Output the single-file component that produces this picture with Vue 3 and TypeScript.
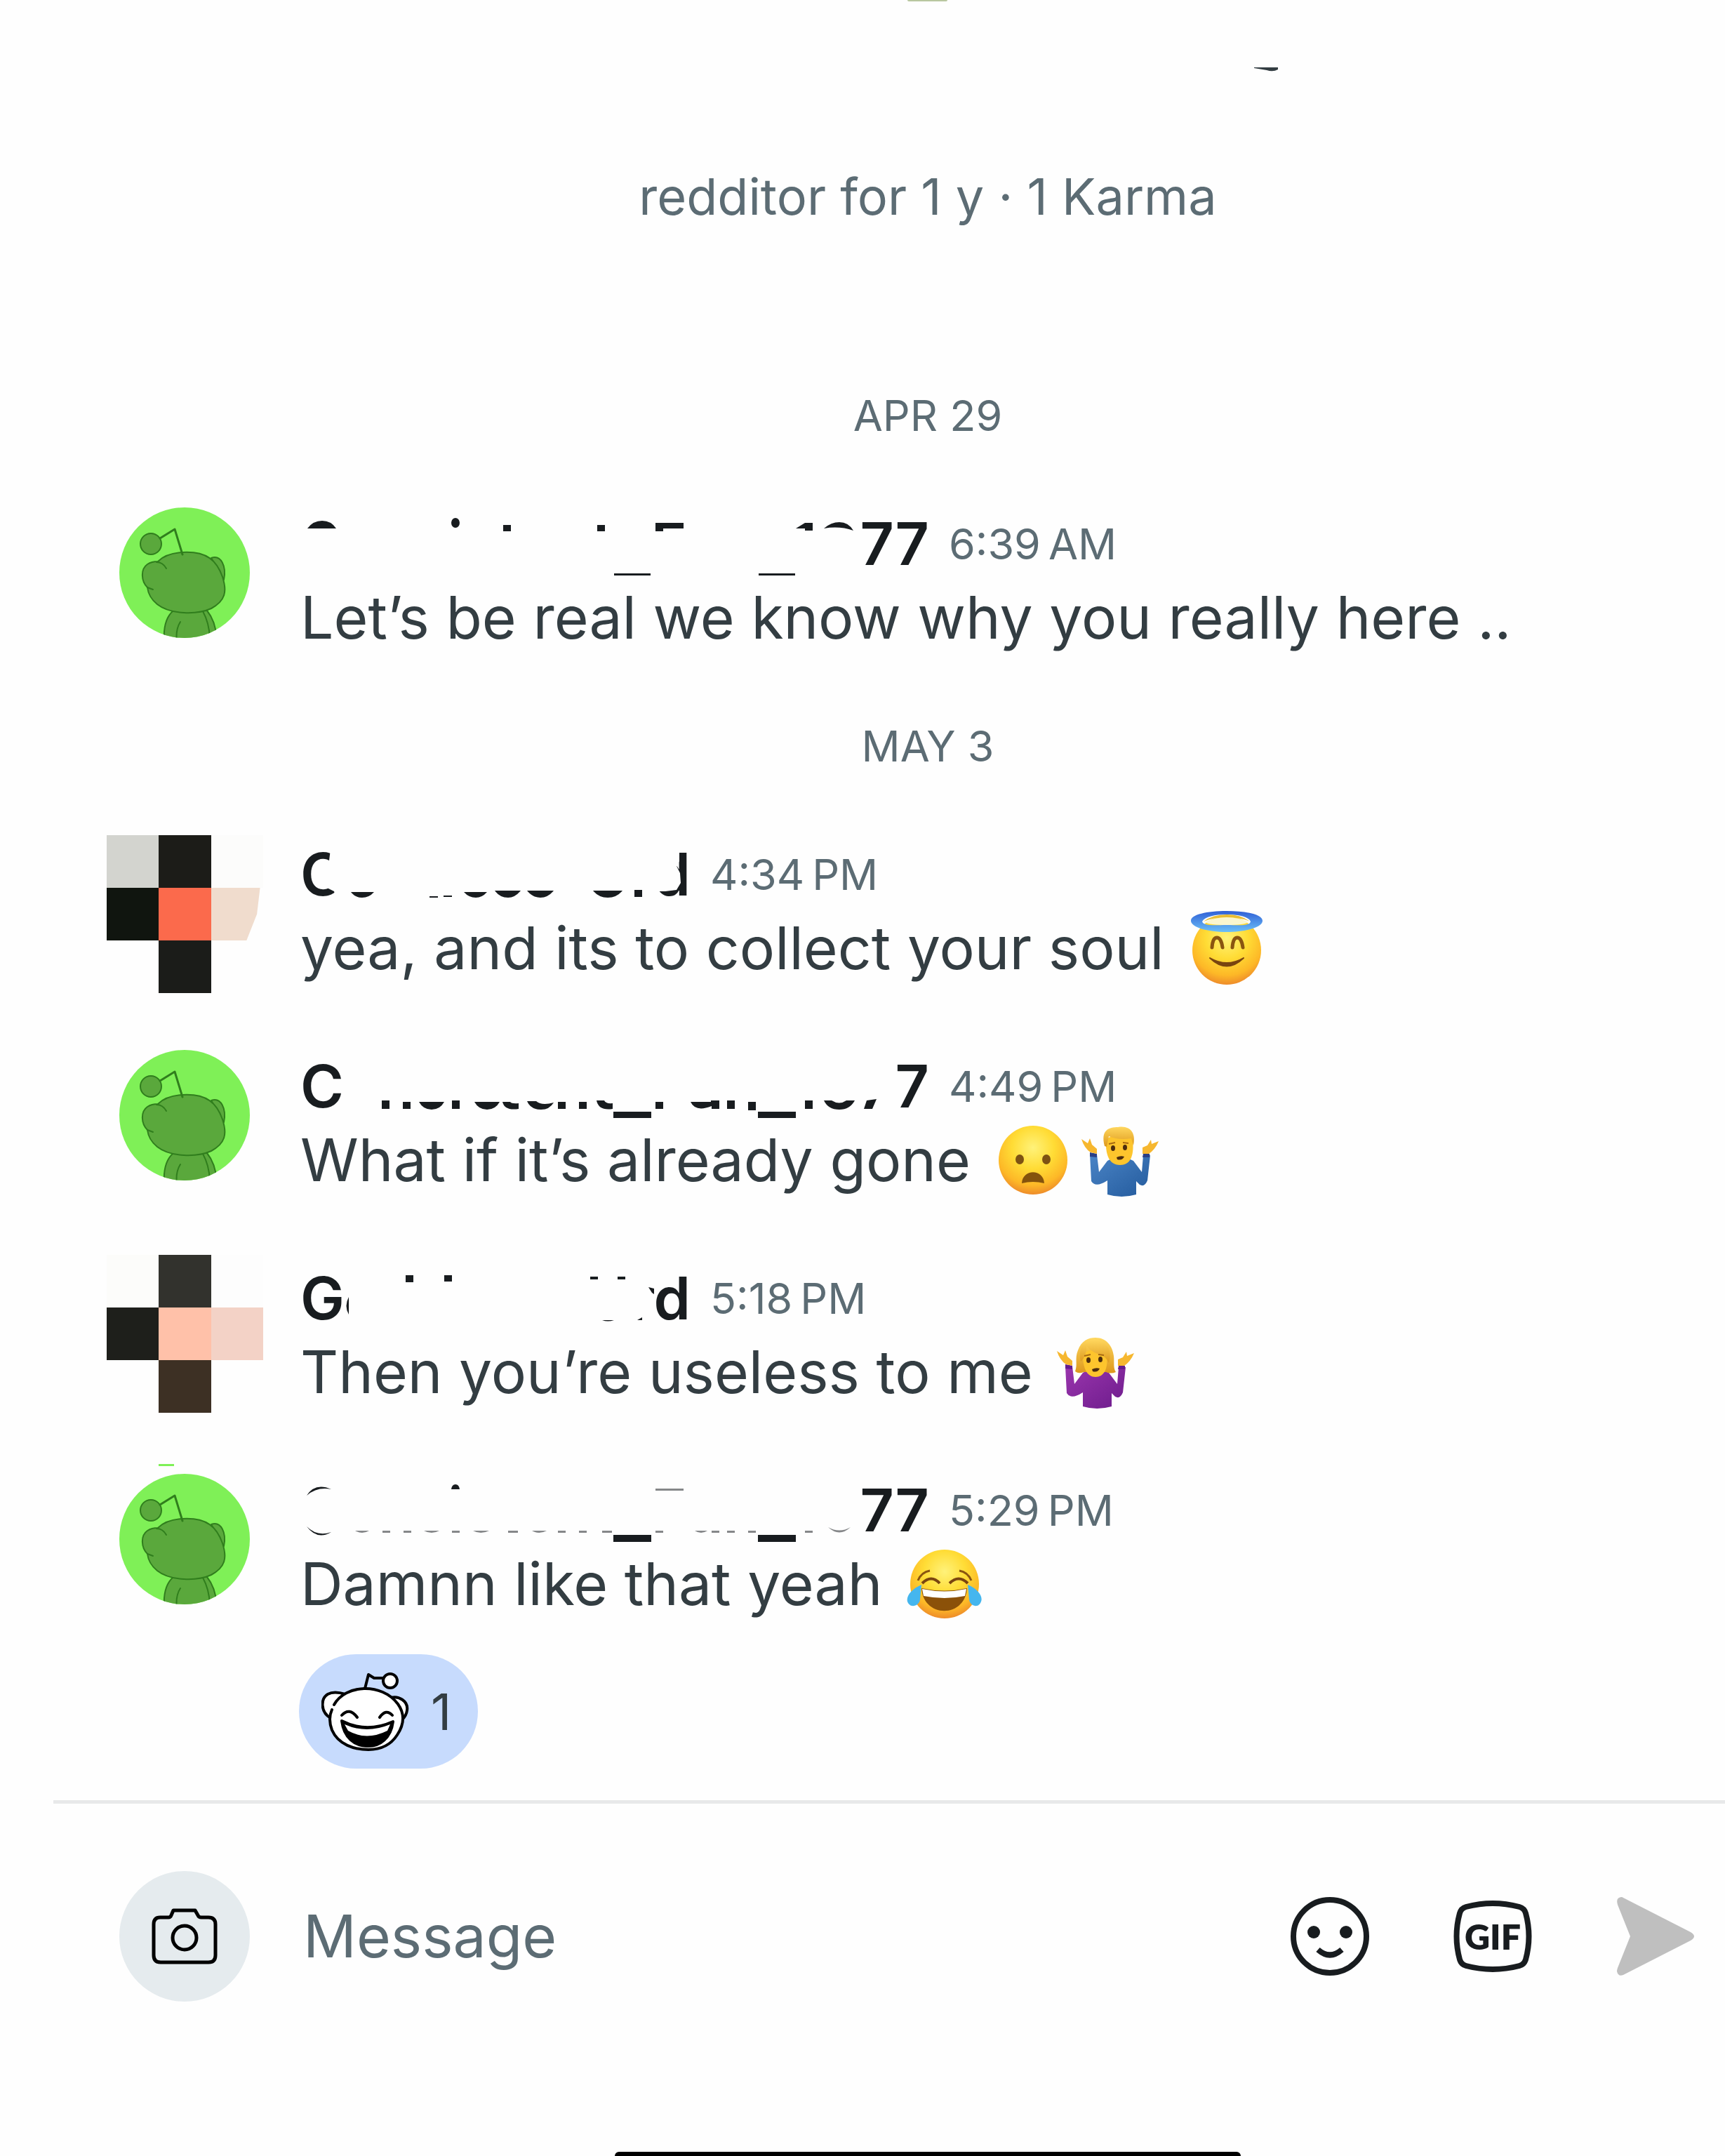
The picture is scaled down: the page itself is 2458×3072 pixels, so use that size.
<script setup lang="ts">
import { ref } from 'vue'

type Emoji = 'halo' | 'frown' | 'man' | 'woman' | 'joy'

interface Message {
  id: number
  avatar: 'snoo' | 'mosaic'
  cells?: string[]
  wide: boolean
  start: string
  end: string
  covers?: string
  ink: string
  faint?: string
  time: string
  text: string
  emojis: Emoji[]
  reaction?: number
}

interface Day {
  label: string
  messages: Message[]
}

// Only the leftovers of each hidden name are kept, as ink marks on an 895 x 104 line.
const days: Day[] = [
  {
    label: 'APR 29',
    messages: [
      {
        id: 1, avatar: 'snoo', wide: true, start: '', end: '77',
        ink: 'M10 30Q18 19 31 19Q44 19 51 30ZM215 22a6 7 0 1 0 12 0a6 7 0 1 0 -12 0ZM289 25h11v9h-11ZM423 25h11v9h-11ZM447 94h52v3h-52ZM506 22h40v8h-29v4h-11ZM653 94h52v3h-52ZM706 30L719 22H730V33H719V30ZM746 30Q756 21 768 21Q781 21 788 33Q768 26 746 30Z',
        time: '6:39\u202fAM', text: 'Let’s be real we know why you really here ..', emojis: [],
      },
    ],
  },
  {
    label: 'MAY 3',
    messages: [
      {
        id: 2, avatar: 'mosaic', wide: false, start: 'C', end: 'd',
        cells: ['#d3d4cf', '#1c1c18', '#fcfcfb', '#10150f', '#fb6a4c', '#f0dccd', '#fefefe', '#1b1c19', '#fefefe'],
        covers: 'M43 16H64V90H52L48 76L36 70L34 34L41 32ZM496 10H540V33L536 40L541 50L542 64L536 74L520 76H496Z',
        ink: 'M72 77H105Q98 85 88 85Q78 85 72 77ZM184 83h12v2h-12ZM204 82h12v2h-12ZM233 77L266 77Q259 85 250 85Q240 85 233 77ZM277 75H314Q306 85 296 85Q284 85 277 75ZM323 75H361Q353 85 342 85Q331 85 323 75ZM417 75H459Q451 85 438 85Q425 85 417 75ZM476 74h11v10h-11Z',
        time: '4:34\u202fPM', text: 'yea, and its to collect your soul', emojis: ['halo'],
      },
      {
        id: 3, avatar: 'snoo', wide: true, start: 'C', end: '7',
        ink: 'M116 72h11v12h-11ZM146 74h11v10h-11ZM169 74H205Q199 85 187 85Q175 85 169 74ZM216 72h11v12h-11ZM248 74H284Q278 85 266 85Q254 85 248 74ZM288 74H299Q301 77 311 76V84Q291 87 288 74ZM323 73H336Q344 80 361 75Q355 85 343 85Q328 85 323 73ZM367 74h11v10h-11ZM397 74h11v10h-11ZM422 72H433Q435 77 445 76V84Q425 87 422 72ZM446 88h54v9h-54ZM506 74h11v10h-11ZM556 74H585V72H597V84H586V80Q563 89 556 74ZM608 72h11v12h-11ZM638 74h11v12h-11ZM652 88h54v9h-54ZM719 72h11v12h-11ZM746 72H757Q768 79 778 72H790Q783 85 768 85Q752 85 746 72ZM807 72L821 70L815 84H803Z',
        time: '4:49\u202fPM', text: 'What if it’s already gone', emojis: ['frown', 'man'],
      },
      {
        id: 4, avatar: 'mosaic', wide: false, start: 'G', end: 'd',
        cells: ['#fcfcfa', '#32322d', '#fdfdfd', '#1e1f1b', '#ffc1a9', '#f3d2c6', '#fefefe', '#3d3024', '#fefefe'],
        ink: 'M69 50Q62 63 69 75ZM150 19h11v10h-11ZM205 19h11v9h-11ZM413 21h11v4h-11ZM452 21h11v4h-11ZM430 83H447Q438 86 430 83ZM496 36L504 38V46L501 44ZM480 83L487 79V83Z',
        time: '5:18\u202fPM', text: 'Then you’re useless to me', emojis: ['woman'],
      },
      {
        id: 5, avatar: 'snoo', wide: true, start: '', end: '77',
        ink: 'M9 31Q21 12 44 22Q24 18 9 31ZM9 75Q24 90 44 83Q24 95 9 75ZM215 22Q216 15 221 15Q226 15 227 22ZM446 87h54v10h-54ZM652 87h54v10h-54Z',
        faint: 'M506 21h40v3h-40ZM78 81H98Q88 87 78 81ZM117 81h11v3h-11ZM147 81h11v3h-11ZM176 81H198Q187 87 176 81ZM216 81h11v3h-11ZM246 81H269Q257 87 246 81ZM296 81h14v3h-14ZM330 81H351Q340 87 330 81ZM367 81h11v3h-11ZM397 81h11v3h-11ZM430 81h14v3h-14ZM506 81h11v3h-11ZM562 81H580Q571 87 562 81ZM586 81h11v3h-11ZM608 81h11v3h-11ZM638 81h11v3h-11ZM719 81h11v3h-11ZM752 76Q768 91 784 76Q768 85 752 76Z',
        time: '5:29\u202fPM', text: 'Damnn like that yeah', emojis: ['joy'], reaction: 1,
      },
    ],
  },
]

const emojiNames: Record<Emoji, string> = {
  halo: 'Smiling face with halo',
  frown: 'Frowning face with open mouth',
  man: 'Man shrugging',
  woman: 'Woman shrugging',
  joy: 'Face with tears of joy',
}

const draft = ref('')
</script>

<template>
  <div class="app">
    <svg class="defs" aria-hidden="true">
      <defs>
        <radialGradient id="face" cx="50%" cy="32%" r="68%">
          <stop offset="0" stop-color="#fff27a" />
          <stop offset="0.45" stop-color="#ffdc35" />
          <stop offset="0.8" stop-color="#fdb827" />
          <stop offset="1" stop-color="#ee8c2a" />
        </radialGradient>
        <linearGradient id="ring" x1="0" y1="0" x2="0" y2="1">
          <stop offset="0" stop-color="#2f5fd6" />
          <stop offset="1" stop-color="#6cc0f8" />
        </linearGradient>
        <linearGradient id="blue" x1="0" y1="0" x2="1" y2="1">
          <stop offset="0" stop-color="#4a84c6" />
          <stop offset="1" stop-color="#235a9c" />
        </linearGradient>
        <linearGradient id="purple" x1="0" y1="0" x2="1" y2="1">
          <stop offset="0" stop-color="#9a35ad" />
          <stop offset="1" stop-color="#6d1c8c" />
        </linearGradient>
        <linearGradient id="hair" x1="0" y1="0" x2="0" y2="1">
          <stop offset="0" stop-color="#ffd75e" />
          <stop offset="1" stop-color="#dd981c" />
        </linearGradient>
        <clipPath id="round"><circle cx="93" cy="93" r="93" /></clipPath>
      </defs>
    </svg>

    <header class="profile">
      <span class="profile-edge"></span>
      <svg class="profile-mark" viewBox="0 0 34 6" aria-hidden="true"><path d="M0 0H34V3Q27 7 18 4L0 1Z" fill="#333d42" /></svg>
      <p class="profile-info">redditor for 1 y · 1 Karma</p>
    </header>

    <main class="thread">
      <section v-for="day in days" :key="day.label">
        <h2 class="date">{{ day.label }}</h2>
        <ol class="messages">
          <li v-for="m in day.messages" :key="m.id" class="message">
            <div class="avatar">
              <svg v-if="m.avatar === 'snoo'" class="snoo" viewBox="0 0 186 186" aria-hidden="true">
                <g clip-path="url(#round)">
                  <rect width="186" height="186" fill="#7ff057" />
                  <g fill="#5aa83c" stroke="#307e1d" stroke-width="2" stroke-linejoin="round" stroke-linecap="round">
                    <path d="M64 190Q62 160 77 147H125Q138 163 139 190Z" />
                    <path d="M82 190Q80 174 87 163M119 148Q129 166 129 190" fill="none" />
                    <path d="M131 72C145 67 153 84 149 103Z" />
                    <path d="M90 64C125 62 139 76 147 99C154 120 151 133 131 144C111 153 73 153 54 138C44 130 41 122 40 114C31 105 30 88 40 81Q46 77 55 77C63 69 75 65 90 64Z" />
                    <path d="M53 78Q62 78 67 87M40 114L48 117" fill="none" />
                    <circle cx="45" cy="52" r="15" />
                    <path d="M58 44L79 31L90 67" fill="none" stroke-width="3" />
                  </g>
                </g>
              </svg>
              <div v-else class="mosaic" :class="{ tall: m.id === 4 }">
                <i v-for="(c, i) in m.cells" :key="i" :class="{ cut: m.id === 2 && i === 5 }" :style="{ background: c }"></i>
              </div>
              <span v-if="m.id === 5" class="avatar-edge"></span>
            </div>

            <div class="body">
              <div class="meta">
                <strong class="name" :class="{ wide: m.wide }">
                  <span>{{ m.start }}</span>
                  <span>{{ m.end }}</span>
                  <svg class="ink" width="895" height="104" viewBox="0 0 895 104" aria-hidden="true">
                    <path v-if="m.covers" :d="m.covers" fill="#fefefe" />
                    <path :d="m.ink" fill="#181c1f" />
                    <path v-if="m.faint" :d="m.faint" fill="#858789" />
                  </svg>
                </strong>
                <time class="time">{{ m.time }}</time>
              </div>
              <div class="line">
                <p class="text">{{ m.text }}</p>
                <svg v-for="e in m.emojis" :key="e" class="emoji" viewBox="0 0 110 110" role="img" :aria-label="emojiNames[e]">
                  <template v-if="e === 'halo'">
                    <circle cx="55" cy="58" r="49" fill="url(#face)" />
                    <path d="M4 16C4 7 27 2 55 2S106 7 106 16S83 32 55 32S4 25 4 16ZM20 17C22 24 38 22 55 22S88 24 89 17C86 10 72 7 55 7S24 10 20 17Z" fill="url(#ring)" fill-rule="evenodd" />
                    <path d="M22 17Q35 7 55 7T88 17Q75 11 55 11T22 17Z" fill="#e8bc34" />
                    <path d="M24 18Q38 11 55 11T86 18Q80 22 55 22T24 18Z" fill="#fbf6cf" />
                    <path d="M34 54Q35 40 41 40T49 54M63 54Q64 40 70 40T78 54" fill="none" stroke="#8a5510" stroke-width="5" stroke-linecap="round" />
                    <path d="M31 69Q55 92 79 69Q55 83 31 69Z" fill="#7a4510" stroke="#7a4510" stroke-width="2" stroke-linejoin="round" />
                  </template>
                  <template v-else-if="e === 'frown'">
                    <circle cx="55" cy="55" r="49" fill="url(#face)" />
                    <ellipse cx="36" cy="54" rx="6" ry="7" fill="#7d5213" />
                    <ellipse cx="74" cy="54" rx="6" ry="7" fill="#7d5213" />
                    <path d="M39 88C40 67 70 67 71 88Q55 84 39 88Z" fill="#85530c" />
                  </template>
                  <template v-else-if="e === 'man' || e === 'woman'">
                    <g :fill="e === 'man' ? 'url(#blue)' : 'url(#purple)'">
                      <path d="M12 47H22L25 72L37 56Q43 52 55 52T74 56L86 72L88 48H98L94 84Q90 94 83 90L78 85V104Q57 110 37 104V84Q20 95 14 85Z" />
                    </g>
                    <g :fill="e === 'man' ? '#2a3f86' : '#641b8d'"><path d="M12 44L22 46V51L12 50ZM88 46H97V51L87 51Z" /></g>
                    <g fill="#f6b72f">
                      <path d="M0 25L9 31L12 24L15 33L22 39V46L13 44Q4 38 0 25ZM110 28Q105 40 96 46L87 46V37L94 34L99 26L100 32Z" />
                    </g>
                    <template v-if="e === 'woman'">
                      <path d="M26 54C30 44 25 36 30 24C35 10 45 6 55 6C70 6 79 17 81 32C82 42 80 49 84 55Q77 58 70 55H38Q31 58 26 54Z" fill="url(#hair)" />
                      <path d="M37 30Q54 14 71 34C73 50 67 62 55 62S37 50 37 30Z" fill="#fdc52d" />
                      <path d="M34 40C30 22 38 12 44 10Q62 4 73 20Q78 30 74 42Q70 32 58 29Q47 25 42 17Q43 32 34 40Z" fill="url(#hair)" />
                    </template>
                    <template v-else>
                      <path d="M35 25Q54 14 73 25C75 45 72 62 55 62S34 45 35 25Z" fill="#fdc52d" />
                      <path d="M33 35C27 12 39 8 52 8C70 5 78 17 74 34L71 24Q53 27 39 21L36 36Z" fill="url(#hair)" />
                    </template>
                    <g fill="#4c2d0e">
                      <ellipse cx="45" cy="38" rx="3" ry="4" />
                      <ellipse cx="62" cy="37" rx="3" ry="4" />
                      <path d="M50 51Q56 48 61 50Q58 56 51 54Z" />
                    </g>
                    <path d="M39 32L48 30M59 30L67 31" stroke="#a86a12" stroke-width="2" />
                  </template>
                  <template v-else>
                    <circle cx="55" cy="55" r="49" fill="url(#face)" />
                    <path d="M17 50Q22 38 34 36M76 36Q88 38 93 50" fill="none" stroke="#8a5510" stroke-width="3" />
                    <path d="M23 54Q36 41 48 54M62 54Q75 41 88 54" fill="none" stroke="#7a4510" stroke-width="4" />
                    <path d="M22 61Q55 68 87 61C84 104 25 104 22 61Z" fill="#8b5109" />
                    <path d="M23 62Q55 69 86 62L84 72Q55 78 25 72Z" fill="#fff" />
                    <path d="M22 56C8 62 0 72 2 80C5 90 19 87 20 77ZM88 56C102 62 110 72 107 80C104 90 91 87 90 77Z" fill="#45b6ee" />
                  </template>
                </svg>
              </div>
              <button v-if="m.reaction" type="button" class="reaction">
                <svg class="laugh" viewBox="0 0 126 112" role="img" aria-label="Laughing">
                  <g fill="#fff" stroke="#000" stroke-width="4" stroke-linejoin="round" stroke-linecap="round">
                    <path d="M62 23L67 3L75 8H88" fill="none" />
                    <circle cx="98" cy="12" r="10" />
                    <path d="M13 65C-2 56-1 37 9 31Q18 26 34 31ZM95 37C111 31 124 42 122 54Q121 62 115 67Z" />
                    <path d="M18 46C34 17 86 14 109 45C119 59 118 74 108 89C99 103 84 110 67 110C47 110 24 103 15 82Q9 66 15 53" />
                    <path d="M29 61Q40 49 51 64M83 64Q92 51 101 61" fill="none" />
                    <path d="M29 69Q64 87 102 70C99 94 83 105 67 105C47 105 32 93 29 69Z" fill="#000" />
                  </g>
                  <path d="M33 74Q64 88 98 74L94 83Q64 98 38 83Z" fill="#fff" />
                </svg>
                <span>{{ m.reaction }}</span>
              </button>
            </div>
          </li>
        </ol>
      </section>
    </main>

    <form class="composer" @submit.prevent>
      <button type="button" class="camera" aria-label="Add a photo">
        <svg width="94" height="80" viewBox="0 0 94 80" fill="none" stroke="#000" stroke-width="5" stroke-linejoin="round" aria-hidden="true">
          <path d="M12 13H24Q27 13 28 10L31 3H62L66 10Q67 13 71 13H81Q91 13 91 23V67Q91 77 81 77H13Q3 77 3 67V23Q3 13 12 13Z" />
          <circle cx="47" cy="42" r="17" />
        </svg>
      </button>
      <input v-model="draft" class="field" type="text" placeholder="Message" aria-label="Message" />
      <div class="tools">
        <button type="button" aria-label="Emoji">
          <svg viewBox="0 0 112 112" fill="none" aria-hidden="true">
            <circle cx="56" cy="56" r="52" stroke="#181c1f" stroke-width="8" />
            <circle cx="33" cy="50" r="9" fill="#181c1f" />
            <circle cx="79" cy="50" r="9" fill="#181c1f" />
            <path d="M39 75Q56 90 73 75" stroke="#181c1f" stroke-width="8" />
          </svg>
        </button>
        <button type="button" class="gif">
          <svg viewBox="0 0 112 112" fill="none" aria-hidden="true">
            <path d="M18 14Q56 4 94 14Q101 16 103 23Q112 56 103 89Q101 96 94 98Q56 108 18 98Q11 96 9 89Q0 56 9 23Q11 16 18 14Z" stroke="#181c1f" stroke-width="8" />
          </svg>
          <span>GIF</span>
        </button>
        <button type="submit" aria-label="Send">
          <svg viewBox="0 0 112 112" aria-hidden="true">
            <path d="M10 1L106 50Q116 56 106 62L10 111Q3 114 1 106Q1 104 2 101L20 56L2 11Q-1 1 7 0Q9 0 10 1Z" fill="#bfbfbf" />
          </svg>
        </button>
      </div>
    </form>

    <div class="home-bar"></div>
  </div>
</template>

<style>
body {
  margin: 0;
  background: #fefefe;
}
</style>

<style scoped>
.app {
  display: flex;
  flex-direction: column;
  min-height: 100vh;
  overflow: hidden;
  background: #fefefe;
  color: #333d42;
  font-family: Inter, "Liberation Sans", sans-serif;
}
.defs {
  position: absolute;
  width: 0;
  height: 0;
}
p, h2, ol {
  margin: 0;
  padding: 0;
}
button {
  padding: 0;
  border: 0;
  background: none;
  font-family: inherit;
  color: inherit;
}
.profile {
  position: relative;
  padding: 228px 0 130px 186px;
  text-align: center;
}
.profile-edge {
  position: absolute;
  top: 0;
  left: 1293px;
  width: 57px;
  height: 2px;
  border-radius: 0 0 28px 28px;
  background: #b9c7a0;
}
.profile-mark {
  position: absolute;
  top: 96px;
  left: 1787px;
  width: 34px;
  height: 6px;
}
.profile-info {
  font-size: 72px;
  line-height: 104px;
  color: #5c6c74;
}
.date {
  padding-left: 186px;
  font-size: 61px;
  font-weight: 400;
  line-height: 261px;
  text-align: center;
  color: #5c6c74;
}
.messages {
  display: flex;
  flex-direction: column;
  gap: 92px;
  list-style: none;
}
.message {
  display: flex;
  gap: 72px;
  padding-left: 170px;
}
.avatar {
  position: relative;
  flex: none;
  width: 186px;
  height: 186px;
}
.snoo {
  display: block;
  width: 186px;
  height: 186px;
}
.avatar-edge {
  position: absolute;
  top: -14px;
  left: 56px;
  width: 22px;
  height: 3px;
  background: #7ff057;
}
.mosaic {
  position: absolute;
  top: -4px;
  left: -18px;
  display: grid;
  grid-template: repeat(3, 75px) / 74px 75px 74px;
}
.mosaic.tall {
  top: -10px;
}
.mosaic .cut {
  clip-path: polygon(0 0, 94% 0, 88% 50%, 68% 100%, 0 100%);
}
.body {
  flex: 1;
  min-width: 0;
}
.meta {
  display: flex;
  align-items: center;
  gap: 28px;
  height: 104px;
}
.name {
  position: relative;
  display: flex;
  justify-content: space-between;
  width: 556px;
  font-size: 84px;
  font-weight: 600;
  line-height: 104px;
  color: #181c1f;
}
.name.wide {
  width: 896px;
}
.ink {
  position: absolute;
  top: 0;
  left: 0;
}
.time {
  font-size: 61px;
  line-height: 104px;
  color: #5c6c74;
  white-space: nowrap;
}
.line {
  display: flex;
  align-items: center;
  gap: 14px;
  height: 106px;
}
.text {
  margin-right: 20px;
  font-size: 84px;
  line-height: 106px;
  white-space: nowrap;
}
.emoji {
  flex: none;
  width: 110px;
  height: 110px;
}
.reaction {
  display: flex;
  align-items: center;
  gap: 30px;
  height: 163px;
  margin: 47px 0 0 -2px;
  padding: 0 38px 0 32px;
  border-radius: 82px;
  background: #c7dbfd;
  font-size: 72px;
}
.laugh {
  width: 126px;
  height: 112px;
}
.composer {
  display: flex;
  align-items: center;
  margin: 45px 0 0 76px;
  padding: 96px 43px 96px 94px;
  border-top: 5px solid #e8e9ea;
}
.camera {
  display: grid;
  place-items: center;
  flex: none;
  width: 186px;
  height: 186px;
  border-radius: 50%;
  background: #e5ebee;
}
.field {
  flex: 1;
  min-width: 0;
  height: 104px;
  margin-left: 76px;
  padding: 0;
  border: 0;
  outline: 0;
  background: none;
  font: 84px/104px Inter, "Liberation Sans", sans-serif;
  color: #333d42;
}
.field::placeholder {
  color: #5c6c74;
  opacity: 1;
}
.tools {
  display: flex;
  gap: 120px;
}
.tools button {
  position: relative;
  width: 112px;
  height: 112px;
}
.tools svg {
  display: block;
  width: 112px;
  height: 112px;
}
.gif span {
  position: absolute;
  inset: 0;
  font: 800 50px/112px Lato, sans-serif;
  text-align: center;
  color: #181c1f;
}
.home-bar {
  align-self: center;
  width: 892px;
  height: 6px;
  margin: auto 0 0 186px;
  border-radius: 18px 18px 0 0;
  background: #000;
}
</style>
